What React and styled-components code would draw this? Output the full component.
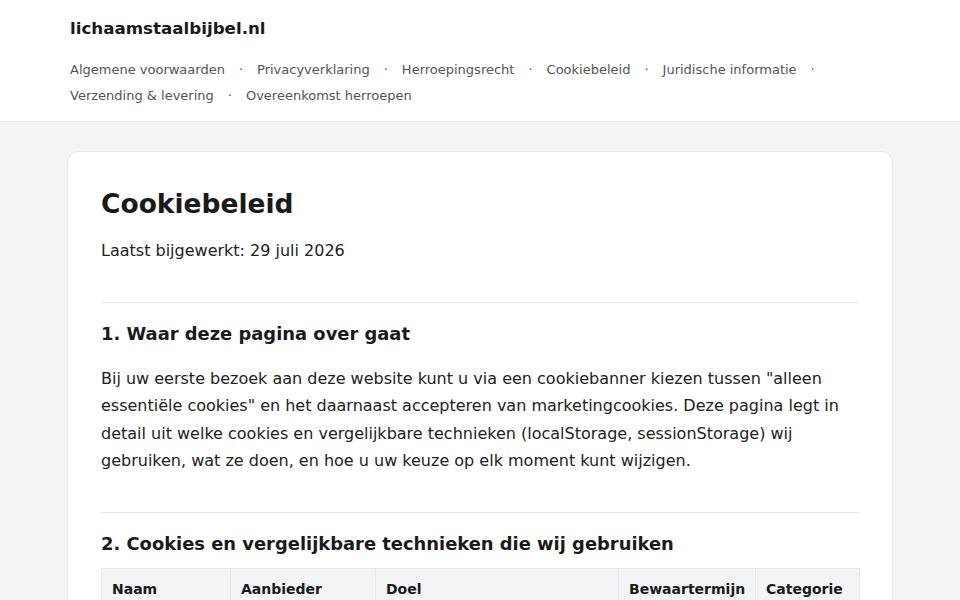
import React from "react";
import styled, { createGlobalStyle } from "styled-components";

const GlobalStyle = createGlobalStyle`
  * { box-sizing: border-box; }
  body {
    margin: 0;
    background: #f3f4f6;
    font-family: "DejaVu Sans", "Noto Sans", sans-serif;
    color: #222;
  }
`;

const navLinks = [
  "Algemene voorwaarden",
  "Privacyverklaring",
  "Herroepingsrecht",
  "Cookiebeleid",
  "Juridische informatie",
  "Verzending & levering",
  "Overeenkomst herroepen",
];

const columns = [
  { label: "Naam", width: 129 },
  { label: "Aanbieder", width: 145 },
  { label: "Doel", width: 243 },
  { label: "Bewaartermijn", width: 137 },
  { label: "Categorie", width: 104 },
];

function App() {
  return (
    <>
      <GlobalStyle />
      <Header>
        <HeaderInner>
          <SiteTitle>lichaamstaalbijbel.nl</SiteTitle>
          <Nav>
            {navLinks.map((link, i) => (
              <NavItem key={link}>
                <NavLink href="#">{link}</NavLink>
                {i < navLinks.length - 1 && <Sep>·</Sep>}
              </NavItem>
            ))}
          </Nav>
        </HeaderInner>
      </Header>

      <Main>
        <Card>
          <Title>Cookiebeleid</Title>
          <Updated>Laatst bijgewerkt: 29 juli 2026</Updated>

          <Section>
            <SectionTitle>1. Waar deze pagina over gaat</SectionTitle>
            <Paragraph>
              Bij uw eerste bezoek aan deze website kunt u via een cookiebanner
              kiezen tussen "alleen essentiële cookies" en het daarnaast
              accepteren van marketingcookies. Deze pagina legt in detail uit
              welke cookies en vergelijkbare technieken (localStorage,
              sessionStorage) wij gebruiken, wat ze doen, en hoe u uw keuze op
              elk moment kunt wijzigen.
            </Paragraph>
          </Section>

          <Section>
            <SectionTitle $tight>
              2. Cookies en vergelijkbare technieken die wij gebruiken
            </SectionTitle>
            <Table>
              <colgroup>
                {columns.map((c) => (
                  <col key={c.label} style={{ width: c.width }} />
                ))}
              </colgroup>
              <thead>
                <tr>
                  {columns.map((c) => (
                    <Th key={c.label}>{c.label}</Th>
                  ))}
                </tr>
              </thead>
              <tbody>
                <tr>
                  <Td>cookie_consent</Td>
                  <Td>lichaamstaalbijbel.nl</Td>
                  <Td>Onthoudt uw cookiekeuze</Td>
                  <Td>12 maanden</Td>
                  <Td>Essentieel</Td>
                </tr>
              </tbody>
            </Table>
          </Section>
        </Card>
      </Main>
    </>
  );
}

export default App;

const Header = styled.header`
  background: #fff;
  border-bottom: 1px solid #e5e7eb;
`;

const HeaderInner = styled.div`
  width: 820px;
  margin: 0 auto;
  padding: 16px 0 12px;
`;

const SiteTitle = styled.div`
  font-size: 16.7px;
  font-weight: 700;
  line-height: 24px;
  color: #1a1a1a;
`;

const Nav = styled.nav`
  display: flex;
  flex-wrap: wrap;
  margin-top: 17px;
`;

const NavItem = styled.span`
  display: inline-flex;
  align-items: center;
  font-size: 13px;
  line-height: 26px;
`;

const NavLink = styled.a`
  color: #555;
  text-decoration: none;
`;

const Sep = styled.span`
  color: #555;
  margin: 0 14px;
`;

const Main = styled.main`
  padding: 29px 0 40px;
`;

const Card = styled.article`
  width: 826px;
  margin: 0 auto;
  background: #fff;
  border: 1px solid #e5e7eb;
  border-radius: 12px;
  padding: 35px 33px 40px;
`;

const Title = styled.h1`
  margin: 0;
  font-size: 26.5px;
  line-height: 34px;
  font-weight: 700;
  color: #1a1a1a;
`;

const Updated = styled.p`
  margin: 16px 0 0;
  font-size: 16px;
  line-height: 27.5px;
  color: #222;
`;

const Section = styled.section`
  margin-top: 37px;
  border-top: 1px solid #e5e7eb;
  padding-top: 19px;
`;

const SectionTitle = styled.h2`
  margin: 0 0 ${(p) => (p.$tight ? "12px" : "19px")};
  font-size: 17.9px;
  line-height: 24px;
  font-weight: 700;
  color: #1a1a1a;
`;

const Paragraph = styled.p`
  margin: 0;
  font-size: 16px;
  line-height: 27.5px;
  color: #222;
`;

const Table = styled.table`
  width: 100%;
  border-collapse: collapse;
  table-layout: fixed;
  font-size: 14px;
`;

const Th = styled.th`
  background: #f3f4f6;
  border: 1px solid #e5e7eb;
  text-align: left;
  padding: 10px 10px;
  font-weight: 700;
  color: #1a1a1a;
  line-height: 20px;
`;

const Td = styled.td`
  border: 1px solid #e5e7eb;
  padding: 10px 10px;
  line-height: 20px;
  vertical-align: top;
`;
